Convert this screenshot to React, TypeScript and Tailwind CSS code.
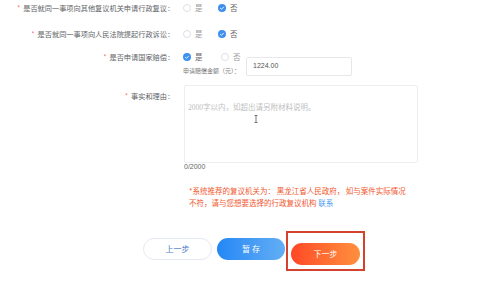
import React from "react";

const font = { fontFamily: '"Noto Sans CJK SC", "Noto Sans", sans-serif' };

function Radio({ checked, label, width }: { checked: boolean; label: string; width: string }) {
  return (
    <div className={`flex items-center ${width}`}>
      {checked ? (
        <svg width="8" height="8" viewBox="0 0 8 8" className="shrink-0">
          <circle cx="4" cy="4" r="4" fill="#3d8ff0" />
          <path d="M2.2 4.1 L3.5 5.3 L5.8 2.9" stroke="#fff" strokeWidth="0.9" fill="none" />
        </svg>
      ) : (
        <span className="w-[8px] h-[8px] shrink-0 rounded-full border border-[#dcdfe6] bg-white" />
      )}
      <span className={`ml-[4px] text-[7.5px] ${checked ? "text-[#666]" : "text-[#9a9a9a]"}`}>{label}</span>
    </div>
  );
}

function Label({ text }: { text: string }) {
  return (
    <div className="w-[172px] shrink-0 flex justify-end items-center text-[7.2px] text-[#606266] h-[16px]">
      <span className="text-[#f56c6c] mr-[3px]">*</span>
      <span>{text}</span>
      <span className="ml-[1px] mr-[2px]">:</span>
    </div>
  );
}

export default function App() {
  return (
    <div className="w-[500px] h-[282px] bg-white overflow-hidden relative" style={font}>
      {/* row 1 */}
      <div className="flex items-center h-[16px]">
        <Label text="是否就同一事项向其他复议机关申请行政复议" />
        <div className="ml-[11px] flex">
          <Radio checked={false} label="是" width="w-[35px]" />
          <Radio checked={true} label="否" width="w-[30px]" />
        </div>
      </div>

      {/* row 2 */}
      <div className="flex items-center h-[16px] mt-[10px]">
        <Label text="是否就同一事项向人民法院提起行政诉讼" />
        <div className="ml-[11px] flex">
          <Radio checked={false} label="是" width="w-[35px]" />
          <Radio checked={true} label="否" width="w-[30px]" />
        </div>
      </div>

      {/* row 3 */}
      <div className="flex items-start mt-[7px]">
        <Label text="是否申请国家赔偿" />
        <div className="ml-[11px] flex flex-col">
          <div className="flex h-[16px]">
            <Radio checked={true} label="是" width="w-[38px]" />
            <Radio checked={false} label="否" width="w-[30px]" />
          </div>
          <div className="flex items-start -mt-[8px]">
            <span className="text-[6px] text-[#777] pt-[9px] w-[63px] whitespace-nowrap">申请赔偿金额（元）：</span>
            <div className="w-[106px] h-[19px] border border-[#e6e8ec] rounded-[2px] flex items-center pl-[6px] text-[7px] text-[#555]" style={{ fontFamily: '"Liberation Sans", sans-serif' }}>
              1224.00
            </div>
          </div>
        </div>
      </div>

      {/* row 4 */}
      <div className="flex items-start mt-[9px]">
        <div className="mt-[3px]">
          <Label text="事实和理由" />
        </div>
        <div className="ml-[12px] flex flex-col">
          <div className="relative w-[234px] h-[78px] border border-[#eceef2] rounded-[2px] pl-[3px] pt-[5px]">
            <span className="text-[7.5px] text-[#c0c0c0]" style={{ fontFamily: '"Liberation Serif", "Noto Sans CJK SC", serif' }}>
              2000字以内，如超出请另附材料说明。
            </span>
            <svg width="4" height="8" viewBox="0 0 4 8" className="absolute left-[69px] top-[29px]">
              <path d="M0.5 0.5 H3.5 M2 0.5 V7.5 M0.5 7.5 H3.5" stroke="#555" strokeWidth="0.8" fill="none" />
            </svg>
          </div>
          <span className="text-[7px] leading-[8px] text-[#666]" style={{ fontFamily: '"Liberation Sans", sans-serif' }}>0/2000</span>
        </div>
      </div>

      {/* notice */}
      <div className="ml-[189px] mt-[14px] w-[230px] text-[7.5px] leading-[12px] text-[#f0582f]">
        <div>*系统推荐的复议机关为： 黑龙江省人民政府， 如与案件实际情况</div>
        <div>
          不符，请与您想要选择的行政复议机构 <span className="text-[#4a9df0]">联系</span>
        </div>
      </div>

      {/* buttons */}
      <div className="flex ml-[143px] mt-[29px]">
        <button className="w-[69px] h-[22px] rounded-full border border-[#e4e9f2] bg-white text-[8px] text-[#4b78bf]">
          上一步
        </button>
        <button className="ml-[5px] w-[68px] h-[22px] rounded-full bg-gradient-to-r from-[#2287f5] to-[#62aef4] text-[8px] text-white">
          暂 存
        </button>
        <div className="relative ml-[6px]">
          <button className="w-[69px] h-[22px] rounded-full bg-gradient-to-r from-[#ff4526] to-[#ff8f3e] text-[8px] text-white">
            下一步
          </button>
          <span className="absolute -left-[5px] -right-[5px] -top-[7px] -bottom-[6px] border-2 border-[#d4412d]" />
        </div>
      </div>
    </div>
  );
}
